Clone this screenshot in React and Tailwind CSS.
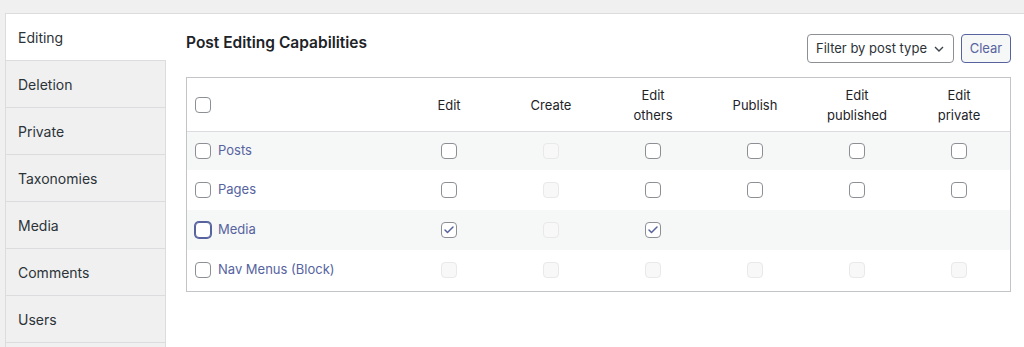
import { Check } from 'lucide-react'

const tabs = ['Editing', 'Deletion', 'Private', 'Taxonomies', 'Media', 'Comments', 'Users', '']

const columns = [
  ['Edit'],
  ['Create'],
  ['Edit', 'others'],
  ['Publish'],
  ['Edit', 'published'],
  ['Edit', 'private'],
]

// c = checkbox, x = checked, d = disabled, n = none
const rows = [
  { name: 'Posts', cells: ['c', 'd', 'c', 'c', 'c', 'c'] },
  { name: 'Pages', cells: ['c', 'd', 'c', 'c', 'c', 'c'] },
  { name: 'Media', cells: ['x', 'd', 'x', 'n', 'n', 'n'], focus: true },
  { name: 'Nav Menus (Block)', cells: ['d', 'd', 'd', 'd', 'd', 'd'] },
]

function Box({ kind = 'c', focus = false }) {
  if (kind === 'n') return null
  if (kind === 'd') {
    return <span className="block w-4 h-4 rounded-[4px] border border-[#e9e9ea] bg-[#f8f8f8]" />
  }
  return (
    <span
      className={`flex items-center justify-center w-4 h-4 rounded-[4px] bg-white border ${
        focus ? 'border-[#56639f] ring-1 ring-[#56639f]' : 'border-[#8c8f94]'
      }`}
    >
      {kind === 'x' && <Check className="w-3 h-3 text-[#56639f]" strokeWidth={3} />}
    </span>
  )
}

export default function App() {
  return (
    <div className="h-[347px] w-full overflow-hidden bg-[#f0f0f0] pt-[13px] pl-[5px] font-['Inter',sans-serif]">
      <div className="flex h-[400px] bg-white border-l border-t border-[#dcdcde]">
        <div className="w-[160px] shrink-0 flex flex-col">
          {tabs.map((t, i) => (
            <div
              key={i}
              className={`h-[47px] shrink-0 flex items-center pl-[12px] text-[14px] text-[#2c3338] border-b border-[#dcdcde] ${
                i === 0 ? 'bg-white' : 'bg-[#f0f0f0] border-r'
              }`}
            >
              {t}
            </div>
          ))}
        </div>

        <div className="flex-1 pl-[20px] pr-[13px] pt-[20px]">
          <div className="flex items-center justify-between h-[29px]">
            <h2 className="text-[15.5px] font-semibold text-[#1d2327] -mt-[12px]">Post Editing Capabilities</h2>
            <div className="flex items-center gap-[7px]">
              <div className="w-[147px] h-[29px] flex items-center justify-between pl-[8px] pr-[9px] bg-white border border-[#8c8f94] rounded-[4px] text-[13px] text-[#2c3338]">
                <span className="whitespace-nowrap">Filter by post type</span>
                <svg width="10" height="6" viewBox="0 0 10 6" fill="none" className="shrink-0">
                  <path d="M1 1l4 4 4-4" stroke="#3c434a" strokeWidth="1.4" />
                </svg>
              </div>
              <button className="w-[50px] h-[29px] rounded-[4px] border border-[#56639f] bg-[#f6f7f7] text-[13px] text-[#56639f]">
                Clear
              </button>
            </div>
          </div>

          <div className="mt-[14px] w-[825px] border border-[#c3c4c7]">
            <div className="grid grid-cols-[211px_repeat(6,102px)] h-[54px] border-b border-[#dcdcde] items-center">
              <div className="pl-[8px] pt-[1px]">
                <Box />
              </div>
              {columns.map((c, i) => (
                <div key={i} className="text-center text-[13px] leading-[20px] text-[#1d2327]">
                  {c.map((l) => (
                    <div key={l}>{l}</div>
                  ))}
                </div>
              ))}
            </div>
            {rows.map((r, ri) => (
              <div
                key={r.name}
                className={`grid grid-cols-[211px_repeat(6,102px)] items-center ${
                  ri % 2 === 0 ? 'bg-[#f6f7f7]' : 'bg-white'
                } ${ri === 0 ? 'h-[38px]' : ri === 3 ? 'h-[41px] pb-[2px]' : 'h-[40px]'}`}
              >
                <div className="flex items-center pl-[8px] gap-[7px]">
                  <Box focus={r.focus} />
                  <span className="text-[13px] text-[#56639f]">{r.name}</span>
                </div>
                {r.cells.map((k, ci) => (
                  <div key={ci} className="flex justify-center">
                    <Box kind={k} />
                  </div>
                ))}
              </div>
            ))}
          </div>
        </div>
      </div>
    </div>
  )
}
